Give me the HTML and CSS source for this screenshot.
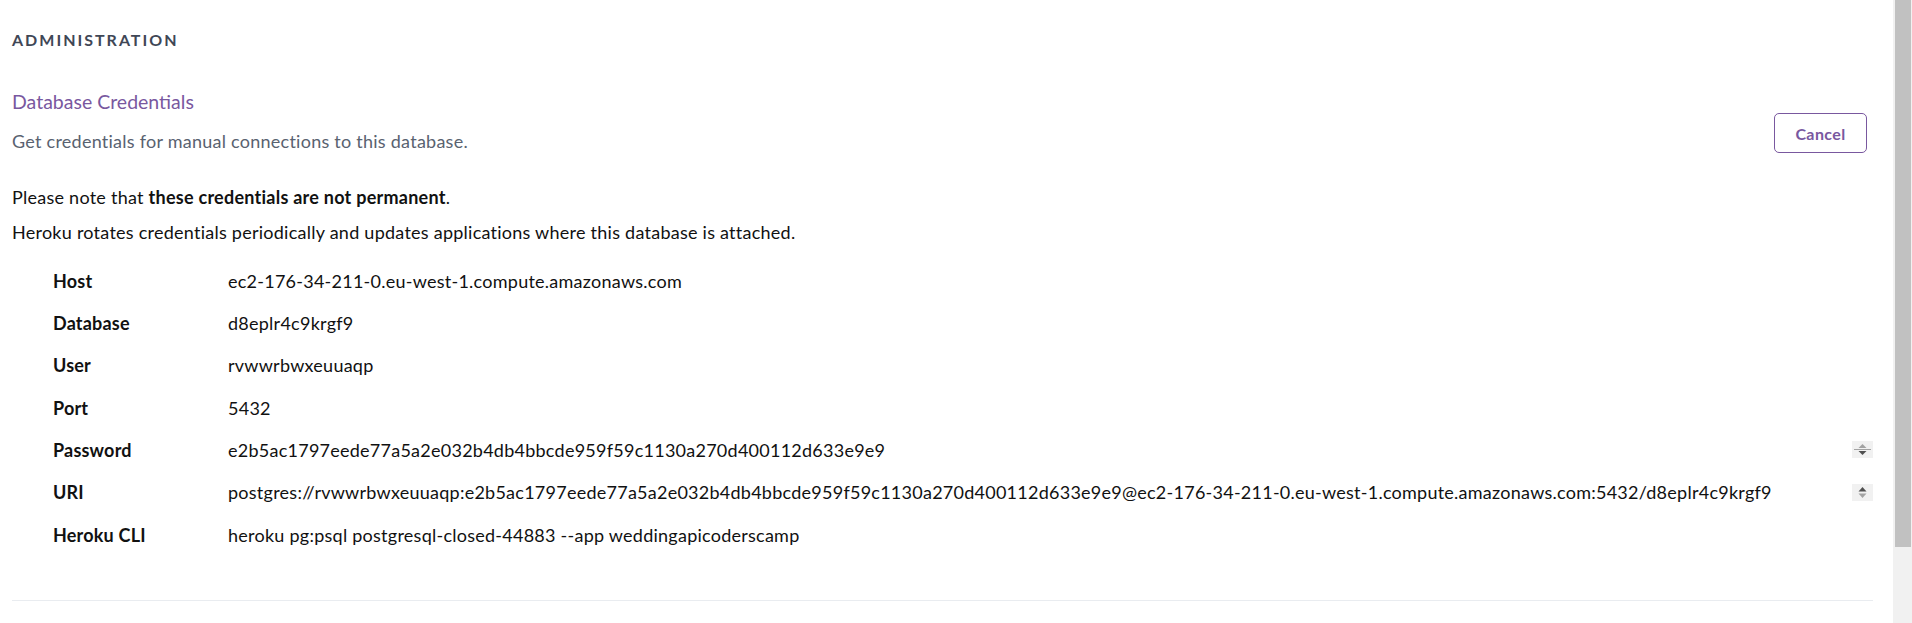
FILE: index.html
```html
<!DOCTYPE html>
<html lang="en">
<head>
<meta charset="utf-8">
<title>Database Credentials</title>
<link rel="stylesheet" href="styles.css">
</head>
<body>
<div class="page">
  <main class="main">
    <h2 class="section-title">Administration</h2>
    <div class="cred-head">
      <div class="cred-intro">
        <h3 class="cred-title">Database Credentials</h3>
        <p class="cred-desc">Get credentials for manual connections to this database.</p>
      </div>
      <button class="btn-cancel" type="button">Cancel</button>
    </div>
    <p class="note note-first">Please note that <strong>these credentials are not permanent</strong>.</p>
    <p class="note">Heroku rotates credentials periodically and updates applications where this database is attached.</p>
    <dl class="creds">
      <div class="row"><dt>Host</dt><dd>ec2-176-34-211-0.eu-west-1.compute.amazonaws.com</dd></div>
      <div class="row"><dt>Database</dt><dd>d8eplr4c9krgf9</dd></div>
      <div class="row"><dt>User</dt><dd>rvwwrbwxeuuaqp</dd></div>
      <div class="row"><dt>Port</dt><dd>5432</dd></div>
      <div class="row"><dt>Password</dt><dd class="field"><span class="field-text">e2b5ac1797eede77a5a2e032b4db4bbcde959f59c1130a270d400112d633e9e9</span>
        <span class="spin"><svg width="21" height="17" viewBox="0 0 21 17"><rect width="21" height="17" fill="#f1f1f1"/><path d="M10.5 3 L14.5 7 L6.5 7 Z" fill="#a3a3a3"/><rect x="2" y="8" width="17" height="1" fill="#a3a3a3"/><path d="M6.5 10 L14.5 10 L10.5 14 Z" fill="#505050"/></svg></span></dd></div>
      <div class="row"><dt>URI</dt><dd class="field"><span class="field-text">postgres://rvwwrbwxeuuaqp:e2b5ac1797eede77a5a2e032b4db4bbcde959f59c1130a270d400112d633e9e9@ec2-176-34-211-0.eu-west-1.compute.amazonaws.com:5432/d8eplr4c9krgf9</span>
        <span class="spin"><svg width="21" height="17" viewBox="0 0 21 17"><rect width="21" height="17" fill="#f1f1f1"/><path d="M10.5 3 L14.5 7.5 L6.5 7.5 Z" fill="#505050"/><path d="M6.5 9.5 L14.5 9.5 L10.5 14 Z" fill="#a3a3a3"/></svg></span></dd></div>
      <div class="row"><dt>Heroku CLI</dt><dd>heroku pg:psql postgresql-closed-44883 --app weddingapicoderscamp</dd></div>
    </dl>
    <hr class="sep">
  </main>
  <div class="scrollbar"><div class="thumb"></div></div>
</div>
</body>
</html>
```
FILE: styles.css
```css
html, body {
  margin: 0;
  padding: 0;
  background: #ffffff;
  overflow: hidden;
}
body {
  font-family: Lato, "Open Sans", "Liberation Sans", sans-serif;
  color: #1b1b1b;
}
.page {
  display: flex;
  height: 623px;
}
.main {
  flex: 1;
  padding: 30px 20px 0 12px;
  min-width: 0;
}
.section-title {
  margin: 0;
  font-size: 16px;
  line-height: 20px;
  font-weight: 700;
  text-transform: uppercase;
  letter-spacing: 2px;
  color: #3f4756;
}
.cred-head {
  display: flex;
  align-items: flex-end;
  justify-content: space-between;
  margin-top: 40px;
  padding-right: 6px;
}
.cred-title {
  margin: 0;
  font-size: 19.5px;
  line-height: 24px;
  font-weight: 400;
  color: #79589f;
}
.cred-desc {
  margin: 15px 0 0;
  font-size: 18px;
  letter-spacing: 0.25px;
  line-height: 24px;
  color: #596270;
}
.btn-cancel {
  width: 93px;
  height: 40px;
  margin-bottom: 0;
  border: 1px solid #79589f;
  border-radius: 5px;
  background: #fff;
  color: #79589f;
  font-family: Lato, "Open Sans", sans-serif;
  font-weight: 700;
  font-size: 16px;
  letter-spacing: 0.4px;
  padding: 0;
}
.note {
  margin: 11px 0 0;
  font-size: 18px;
  letter-spacing: 0.25px;
  line-height: 24px;
  color: #111;
}
.note-first {
  margin-top: 32px;
}
.note strong {
  font-weight: 700;
}
.creds {
  margin: 15.4px 0 0;
  padding: 0;
}
.row {
  display: flex;
  align-items: center;
  height: 42.33px;
}
.row dt {
  width: 216px;
  padding-left: 41px;
  box-sizing: border-box;
  flex: none;
  font-weight: 700;
  font-size: 18px;
  letter-spacing: 0.2px;
  line-height: 24px;
  color: #111;
}
.row dd {
  margin: 0;
  flex: 1;
  min-width: 0;
  font-size: 18px;
  letter-spacing: 0.25px;
  line-height: 24px;
  color: #111;
  white-space: nowrap;
}
.field {
  display: flex;
  align-items: center;
  justify-content: space-between;
}
.field-text {
  overflow: hidden;
}
.spin {
  display: flex;
  flex: none;
}
.sep {
  margin: 44px 0 0;
  border: 0;
  border-top: 1px solid #e9ecf0;
}
.scrollbar {
  width: 19px;
  flex: none;
  background: #f1f1f1;
  display: flex;
  justify-content: center;
}
.thumb {
  width: 16px;
  height: 547px;
  background: #c1c1c1;
}
```
